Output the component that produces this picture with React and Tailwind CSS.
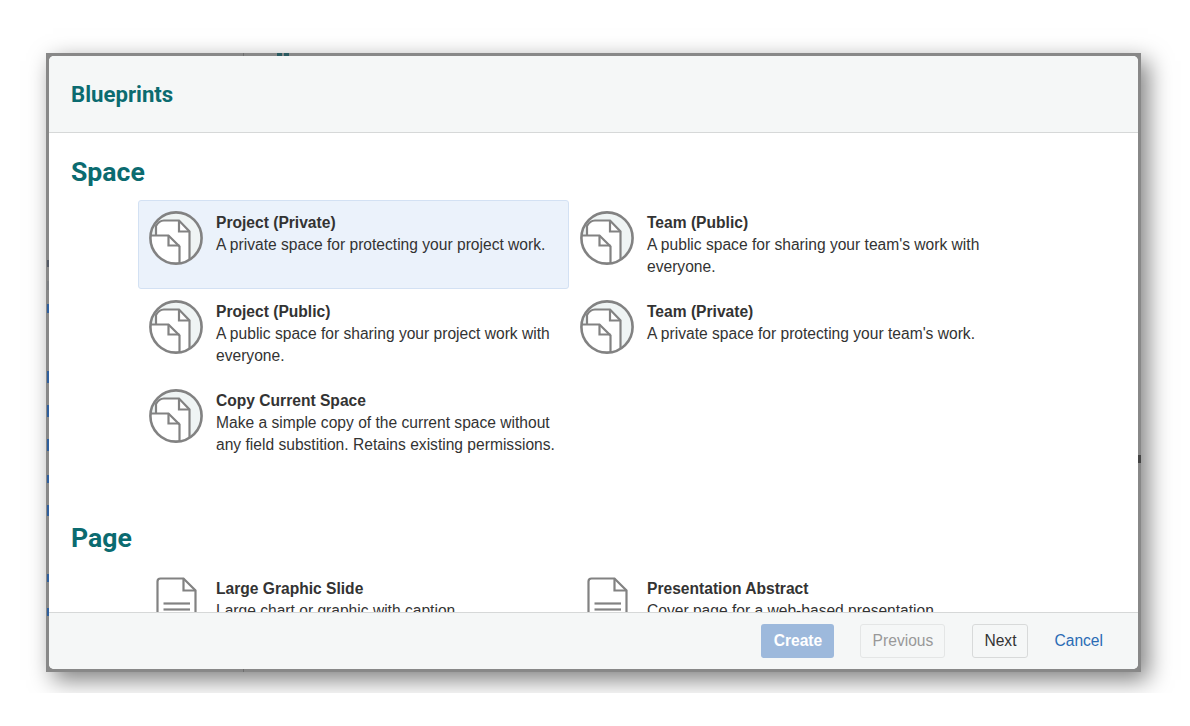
import React from "react";

const spaceItems = [
  { title: "Project (Private)", desc: "A private space for protecting your project work.", selected: true },
  { title: "Team (Public)", desc: "A public space for sharing your team's work with everyone." },
  { title: "Project (Public)", desc: "A public space for sharing your project work with everyone." },
  { title: "Team (Private)", desc: "A private space for protecting your team's work." },
  { title: "Copy Current Space", desc: "Make a simple copy of the current space without any field substition. Retains existing permissions." },
];

const pageItems = [
  { title: "Large Graphic Slide", desc: "Large chart or graphic with caption" },
  { title: "Presentation Abstract", desc: "Cover page for a web-based presentation" },
];

// bits of the page behind that show through the frame
const leftBits = [
  { y: 260, h: 7, c: "#555b66" },
  { y: 281, h: 9, c: "#7d7f82" },
  { y: 304, h: 9, c: "#2f5f9c" },
  { y: 371, h: 12, c: "#2f5f9c" },
  { y: 405, h: 12, c: "#2f5f9c" },
  { y: 439, h: 12, c: "#2f5f9c" },
  { y: 475, h: 8, c: "#2f5f9c" },
  { y: 505, h: 11, c: "#2f5f9c" },
  { y: 574, h: 8, c: "#2f5f9c" },
  { y: 608, h: 8, c: "#2f5f9c" },
];

function SpaceIcon() {
  return (
    <svg width="54" height="54" viewBox="0 0 54 54" fill="none" stroke="#828282" strokeWidth="2.2" className="shrink-0">
      <defs>
        <clipPath id="space-circle">
          <circle cx="27" cy="27" r="25.6" />
        </clipPath>
      </defs>
      <circle cx="27" cy="27" r="25.6" fill="#eff4f4" stroke="none" />
      <g clipPath="url(#space-circle)">
        <path d="M7 15Q10 9.5 15 9.5H30L40.5 20.5V54H0V24.5H7Z" fill="#ffffff" stroke="none" />
        <path d="M7 24.5V15Q10 9.5 15 9.5H30L40.5 20.5V54" />
        <path d="M30 9.5V20.5H40.5" />
        <path d="M0 24.5H19.5L30.5 35.5V54" />
        <path d="M19.5 24.5V34.5H30.5" />
      </g>
      <circle cx="27" cy="27" r="25.6" strokeWidth="2.6" />
    </svg>
  );
}

function PageIcon() {
  return (
    <svg width="54" height="54" viewBox="0 0 54 54" fill="none" stroke="#828282" strokeWidth="2.2" className="shrink-0">
      <path d="M8.5 53V4.5Q8.5 1.5 11.5 1.5H34.5L46.5 13.5V53" />
      <path d="M34.5 1.5V13.5H46.5" />
      <path d="M14.5 26.5H41" />
      <path d="M14.5 32.5H41" />
    </svg>
  );
}

function Item({ item, icon }) {
  return (
    <div
      className={`flex h-[89px] gap-[13px] rounded-[3px] border p-[10px] ${
        item.selected ? "border-[#d3e1f3] bg-[#ebf2fb]" : "border-transparent"
      }`}
    >
      {icon}
      <div className="mt-[1px] w-[342px] text-[15.6px] leading-[22px] text-[#333333]">
        <div className="font-bold">{item.title}</div>
        <div>{item.desc}</div>
      </div>
    </div>
  );
}

export default function App() {
  return (
    <div className="h-[726px] w-full bg-white font-['Liberation_Sans',Arial,sans-serif]">
      <div className="h-[693px] overflow-hidden pl-[46px] pt-[53px]">
        <div className="relative h-[619px] w-[1095px] bg-[#888888] p-[3px] shadow-[7px_8px_22px_rgba(0,0,0,0.5)]">
          {/* dialog */}
          <div className="flex h-full flex-col overflow-hidden rounded-[5px] bg-white">
            <div className="flex h-[77px] shrink-0 items-center border-b border-[#d6d8d8] bg-[#f5f7f7] pl-[22px]">
              <h1 className="mt-[1px] font-['Roboto',sans-serif] text-[22.2px] font-bold text-[#0b6b70]">Blueprints</h1>
            </div>

            <div className="min-h-0 flex-1 overflow-hidden pl-[22px]">
              <h2 className="mt-[24px] h-[30px] font-['Roboto',sans-serif] text-[26.6px] font-bold leading-[30px] text-[#0b6b70]">
                Space
              </h2>
              <div className="ml-[67px] mt-[13px] grid w-[862px] grid-cols-2">
                {spaceItems.map((item) => (
                  <Item key={item.title} item={item} icon={<SpaceIcon />} />
                ))}
              </div>

              <h2 className="mt-[56px] h-[30px] font-['Roboto',sans-serif] text-[26.6px] font-bold leading-[30px] text-[#0b6b70]">
                Page
              </h2>
              <div className="ml-[67px] mt-[13px] grid w-[862px] grid-cols-2">
                {pageItems.map((item) => (
                  <Item key={item.title} item={item} icon={<PageIcon />} />
                ))}
              </div>
            </div>

            <div className="flex h-[57px] shrink-0 items-center justify-end border-t border-[#d6d8d8] bg-[#f5f7f7] pr-[35px] text-[15.6px]">
              <button className="mr-[26px] h-[34px] w-[73px] rounded-[3px] bg-[#9db9dc] font-bold text-white">Create</button>
              <button className="mr-[27px] h-[34px] w-[85px] rounded-[3px] border border-[#e4e6e6] text-[#999999]">Previous</button>
              <button className="mr-[26px] h-[34px] w-[56px] rounded-[3px] border border-[#d8dada] text-[#333333]">Next</button>
              <a className="text-[#2a6cb5]">Cancel</a>
            </div>
          </div>

          {/* page behind showing through the frame */}
          {leftBits.map((b) => (
            <div
              key={b.y}
              className="absolute left-[1px] w-[2px]"
              style={{ top: b.y - 53, height: b.h, backgroundColor: b.c }}
            />
          ))}
          <div className="absolute left-[197px] top-0 h-[3px] w-px bg-[#6f6f6f]" />
          <div className="absolute bottom-0 left-[197px] h-[3px] w-px bg-[#6f6f6f]" />
          <div className="absolute left-[231px] top-0 h-[3px] w-[5px] bg-[#2b5a60]" />
          <div className="absolute left-[238px] top-0 h-[3px] w-[5px] bg-[#2b5a60]" />
          <div className="absolute right-0 top-[402px] h-[8px] w-[3px] bg-[#444444]" />
        </div>
      </div>
    </div>
  );
}
